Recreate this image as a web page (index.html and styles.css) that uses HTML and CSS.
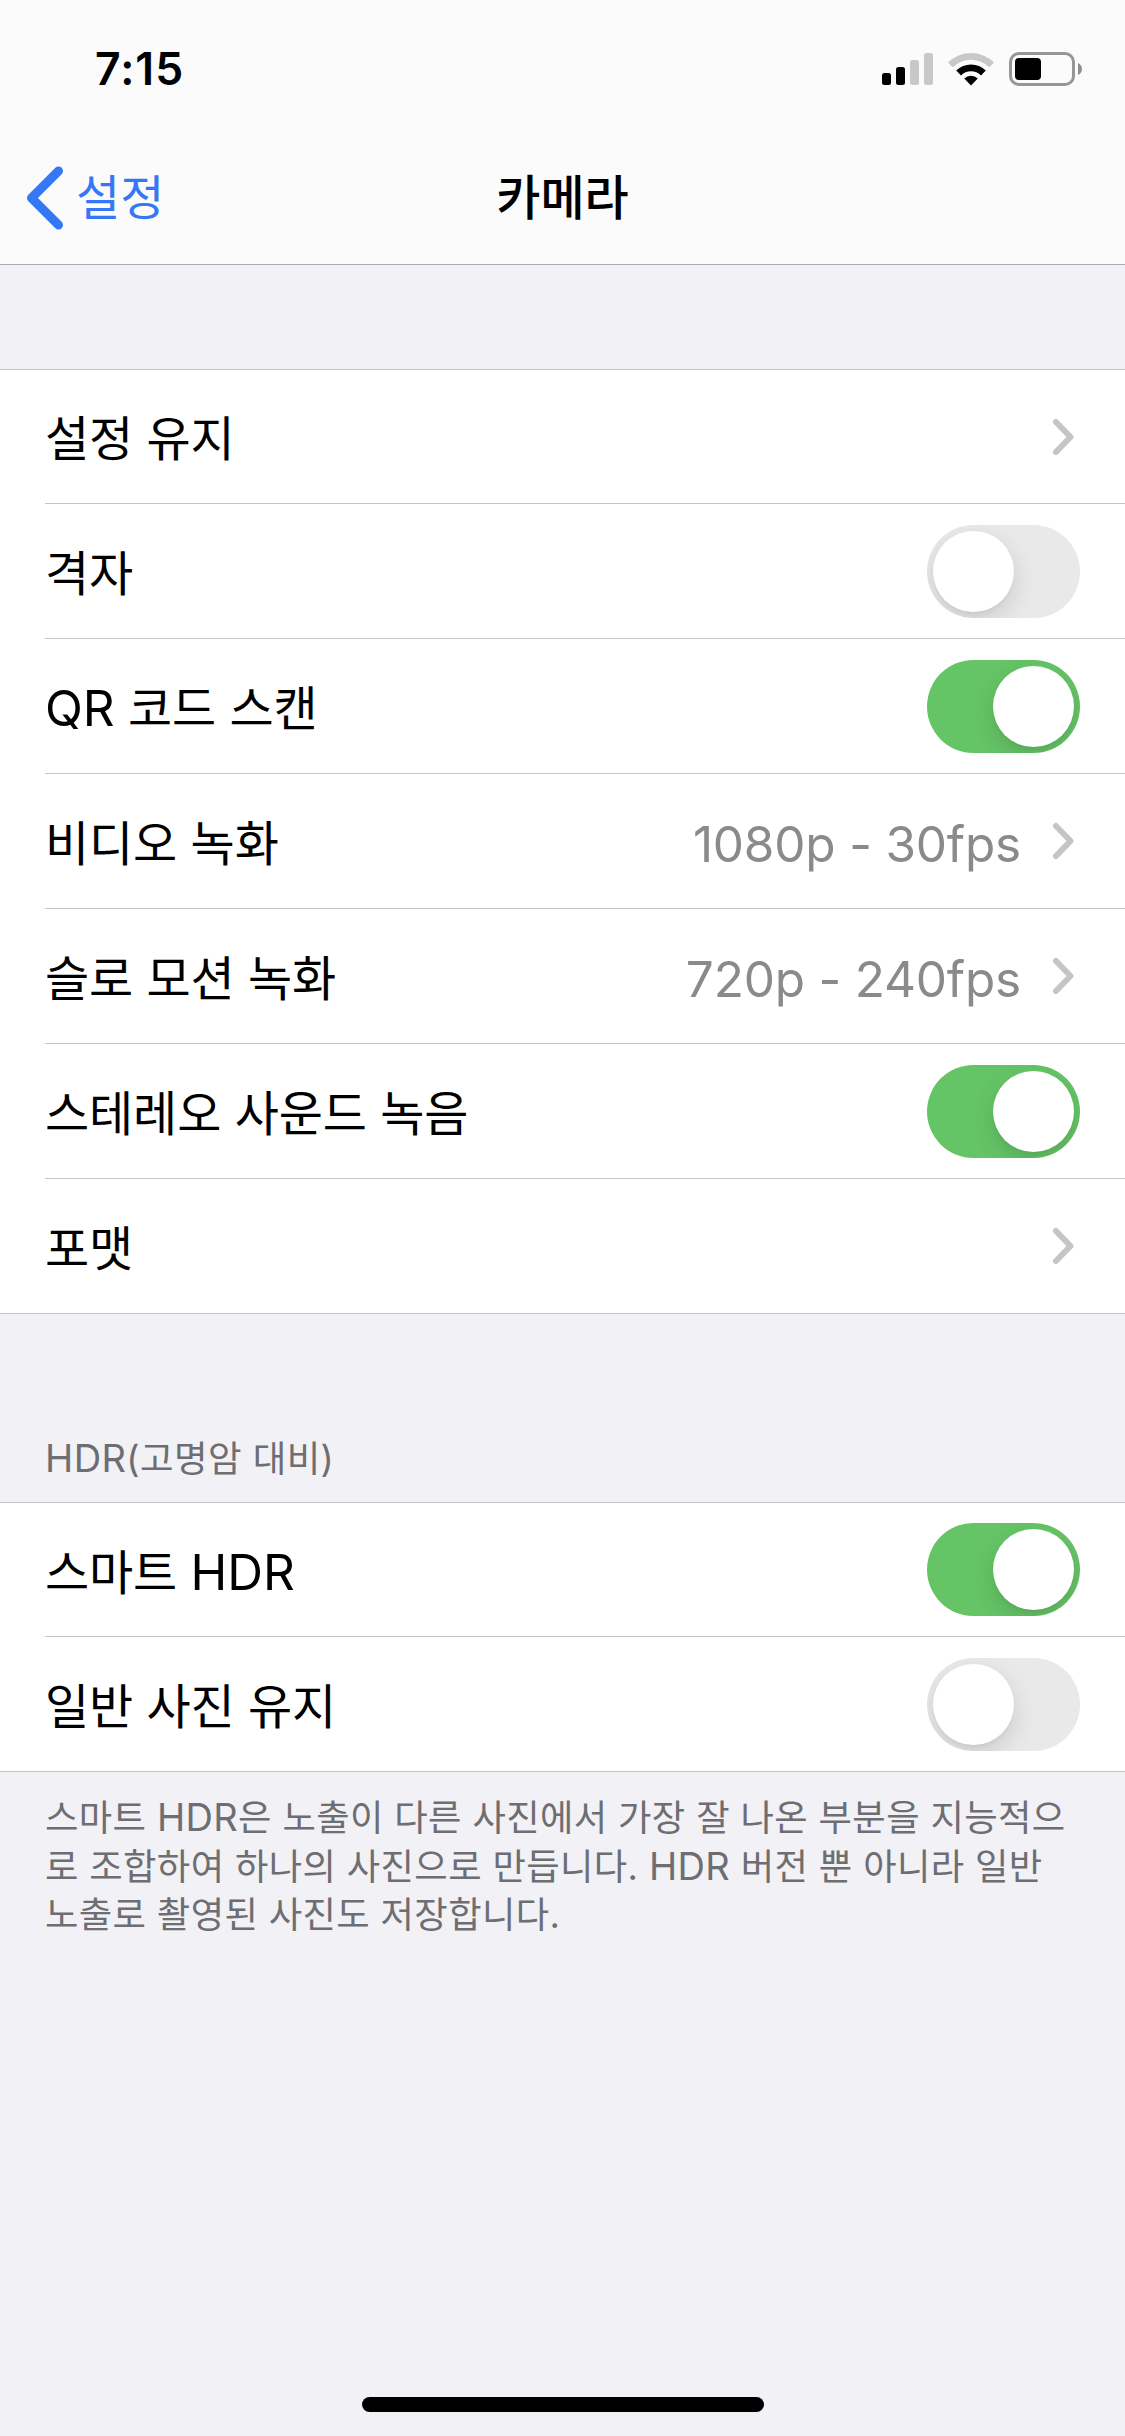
FILE: index.html
```html
<!DOCTYPE html>
<html lang="ko">
<head>
    <meta charset="UTF-8">
    <meta name="viewport" content="width=device-width, initial-scale=1.0">
    <title>카메라</title>
    <link rel="stylesheet" href="styles.css">
</head>
<body>
    <header class="header">
        <!-- Status bar -->
        <div class="status-bar">
            <span class="time">7:15</span>
            <div class="status-icons">
                <svg class="signal" width="51" height="34" viewBox="0 0 51 34">
                    <rect x="0" y="21" width="9" height="12" rx="2.5" fill="#000"/>
                    <rect x="14" y="15" width="9" height="18" rx="2.5" fill="#000"/>
                    <rect x="28" y="8" width="9" height="25" rx="2.5" fill="#c8c8c8"/>
                    <rect x="42" y="1" width="9" height="32" rx="2.5" fill="#c8c8c8"/>
                </svg>
                <svg class="wifi" width="46" height="34" viewBox="0 0 46 34">
                    <path d="M0 10.5 A32.5 32.5 0 0 1 46 10.5 L41.2 15.2 A25.8 25.8 0 0 0 4.8 15.2 Z" fill="#c8c8c8"/>
                    <path d="M8.2 18.6 A21 21 0 0 1 37.8 18.6 L33 23.4 A14.2 14.2 0 0 0 13 23.4 Z" fill="#000"/>
                    <path d="M16.2 26.6 A9.7 9.7 0 0 1 29.8 26.6 L23 33.4 Z" fill="#000"/>
                </svg>
                <svg class="battery" width="74" height="34" viewBox="0 0 74 34">
                    <rect x="1.5" y="1.5" width="63" height="31" rx="8.5" fill="none" stroke="#969696" stroke-width="3"/>
                    <rect x="6" y="6" width="26" height="22" rx="4" fill="#000"/>
                    <path d="M69 11 C74.3 13 74.3 21 69 23 Z" fill="#8e8e8e"/>
                </svg>
            </div>
        </div>
        <!-- Navigation bar -->
        <div class="nav-bar">
            <a class="back">
                <svg width="38" height="64" viewBox="0 0 38 64">
                    <path d="M32.5 5 L5.5 32 L32.5 59" fill="none" stroke="#3478f6" stroke-width="9" stroke-linecap="round" stroke-linejoin="round"/>
                </svg>
                <span class="back-text">설정</span>
            </a>
            <h1 class="title">카메라</h1>
        </div>
    </header>

    <main>
        <section class="group">
            <div class="row">
                <span class="label">설정 유지</span>
                <svg class="chevron" width="24" height="38" viewBox="0 0 24 38"><path d="M6 4 L20.5 19 L6 34"/></svg>
            </div>
            <div class="row">
                <span class="label">격자</span>
                <span class="toggle"><span class="knob"></span></span>
            </div>
            <div class="row">
                <span class="label"><span class="latin">QR</span> 코드 스캔</span>
                <span class="toggle on"><span class="knob"></span></span>
            </div>
            <div class="row">
                <span class="label">비디오 녹화</span>
                <span class="value">1080p - 30fps</span>
                <svg class="chevron" width="24" height="38" viewBox="0 0 24 38"><path d="M6 4 L20.5 19 L6 34"/></svg>
            </div>
            <div class="row">
                <span class="label">슬로 모션 녹화</span>
                <span class="value">720p - 240fps</span>
                <svg class="chevron" width="24" height="38" viewBox="0 0 24 38"><path d="M6 4 L20.5 19 L6 34"/></svg>
            </div>
            <div class="row">
                <span class="label">스테레오 사운드 녹음</span>
                <span class="toggle on"><span class="knob"></span></span>
            </div>
            <div class="row">
                <span class="label">포맷</span>
                <svg class="chevron" width="24" height="38" viewBox="0 0 24 38"><path d="M6 4 L20.5 19 L6 34"/></svg>
            </div>
        </section>

        <h2 class="group-title"><span class="latin-small">HDR</span>(고명암 대비)</h2>
        <section class="group">
            <div class="row">
                <span class="label">스마트 <span class="latin">HDR</span></span>
                <span class="toggle on"><span class="knob"></span></span>
            </div>
            <div class="row">
                <span class="label">일반 사진 유지</span>
                <span class="toggle"><span class="knob"></span></span>
            </div>
        </section>
        <p class="note">스마트 <span class="latin-small">HDR</span>은 노출이 다른 사진에서 가장 잘 나온 부분을 지능적으<br>로 조합하여 하나의 사진으로 만듭니다. <span class="latin-small">HDR</span> 버전 뿐 아니라 일반<br>노출로 촬영된 사진도 저장합니다.</p>
    </main>

    <!-- Home indicator -->
    <div class="home-bar"></div>
</body>
</html>
```
FILE: styles.css
```css
* {
    box-sizing: border-box;
}
body {
    margin: 0;
    height: 2436px;
    display: flex;
    flex-direction: column;
    background-color: #f1f1f6;
    color: #000;
    font-family: Inter, "Noto Sans CJK KR", sans-serif;
    font-size: 48px;
    white-space: nowrap;
}
/* Header */
.header {
    height: 265px;
    background-color: #fbfbfc;
    border-bottom: 1px solid #aaaaad;
}
.status-bar {
    height: 132px;
    padding: 0 42px 0 95px;
    display: flex;
    justify-content: space-between;
    align-items: flex-start;
}
.time {
    padding-top: 43px;
    font-size: 44.5px;
    font-weight: 600;
    line-height: 52px;
    letter-spacing: 1px;
}
.status-icons {
    display: flex;
    gap: 15px;
    padding-top: 52px;
}
.nav-bar {
    height: 132px;
    padding: 0 26px;
    display: grid;
    grid-template-columns: 1fr auto 1fr;
    align-items: center;
}
.back {
    display: flex;
    align-items: center;
    gap: 12px;
    color: #3478f6;
}
.back-text {
    line-height: 60px;
}
.title {
    margin: 0;
    font-size: 48px;
    font-weight: 500;
    line-height: 60px;
}
/* Groups of settings */
main {
    flex: 1;
    padding-top: 104px;
}
.group {
    background-color: #fff;
    border-top: 1px solid #c5c5c7;
    border-bottom: 1px solid #c5c5c7;
}
.row {
    height: 135px;
    margin-left: 45px;
    padding-right: 45px;
    display: flex;
    align-items: center;
    border-bottom: 1px solid #c5c5c7;
}
.row:first-child {
    height: 134px;
}
.row:last-child {
    height: 134px;
    border-bottom: none;
}
.label {
    flex: 1;
    padding-top: 5px;
    line-height: 60px;
    letter-spacing: -0.1px;
}
.latin {
    font-size: 49.5px;
}
.value {
    padding-top: 6px;
    margin-right: 29px;
    font-size: 49.5px;
    line-height: 60px;
    letter-spacing: -0.2px;
    color: #8a8a8d;
}
.chevron {
    margin-right: 6px;
}
.chevron path {
    fill: none;
    stroke: #c5c5c7;
    stroke-width: 6;
    stroke-linecap: round;
    stroke-linejoin: round;
}
/* Switches */
.toggle {
    width: 153px;
    height: 93px;
    padding: 6px;
    display: flex;
    border-radius: 47px;
    background-color: #e9e9e9;
    overflow: hidden;
}
.toggle.on {
    justify-content: flex-end;
    background-color: #65c466;
}
.knob {
    width: 81px;
    height: 81px;
    border-radius: 50%;
    background-color: #fff;
    box-shadow: 0 9px 24px rgba(0, 0, 0, 0.13), 0 3px 3px rgba(0, 0, 0, 0.03);
}
/* Text above and below a group */
.group-title {
    height: 188px;
    margin: 0;
    padding: 120px 45px 0;
    font-size: 36.5px;
    font-weight: 400;
    line-height: 48px;
    letter-spacing: 0.4px;
    color: #6d6d72;
}
.latin-small {
    font-size: 38px;
}
.note {
    margin: 0;
    padding: 21px 45px 0;
    font-size: 36.3px;
    line-height: 48px;
    letter-spacing: 0.37px;
    color: #6d6d72;
}
/* Home indicator */
.home-bar {
    width: 402px;
    height: 15px;
    margin: 0 auto 24px;
    border-radius: 8px;
    background-color: #000;
}
```
